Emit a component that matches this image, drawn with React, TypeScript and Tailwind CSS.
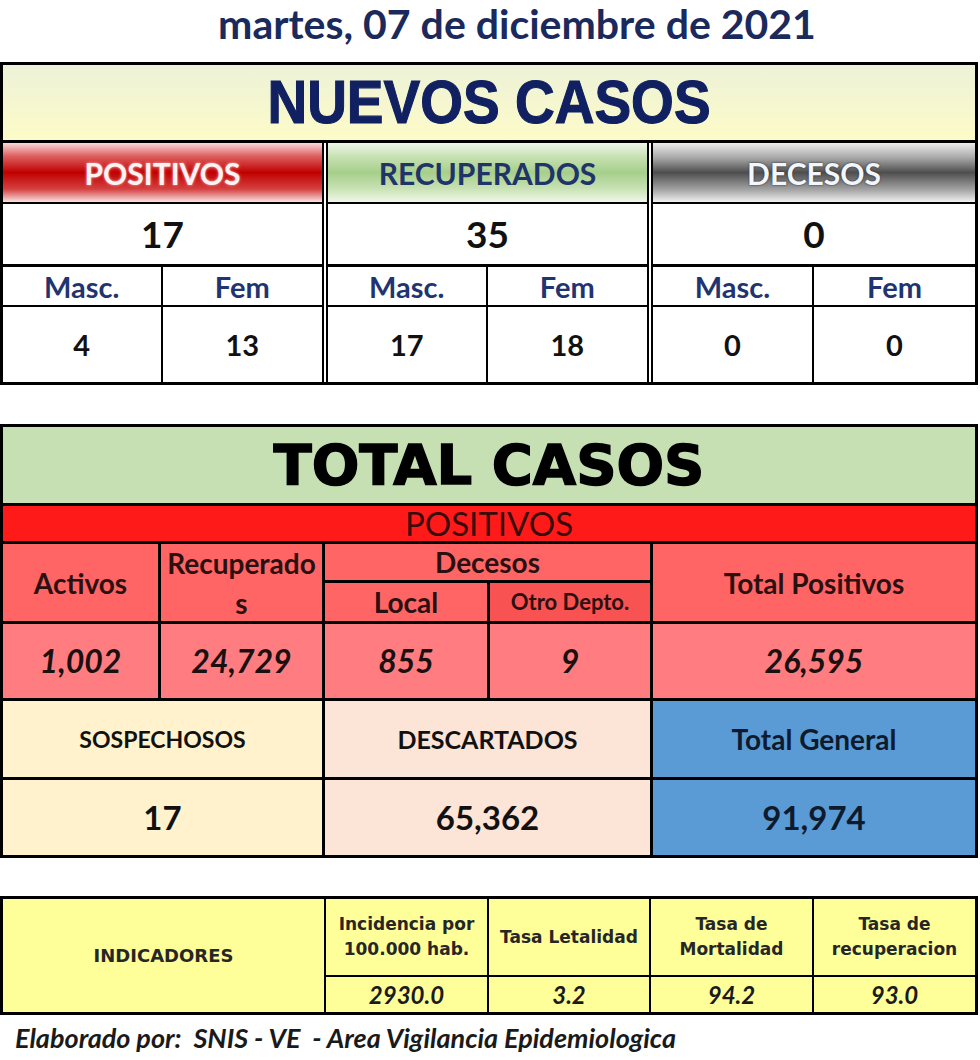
import React from "react";

type GroupProps = {
  title: string;
  titleClass: string;
  bgClass: string;
  total: string;
  m: string;
  f: string;
  className: string;
};

function Group({ title, titleClass, bgClass, total, m, f, className }: GroupProps) {
  return (
    <div className={`flex flex-col border-black ${className}`}>
      <div className={`h-[61px] border-b-2 border-black flex items-center justify-center ${bgClass}`}>
        <span className={`text-[30px] font-bold leading-none ${titleClass}`}>{title}</span>
      </div>
      <div className="h-[63px] border-b-[3px] border-black flex items-center justify-center text-[37px] font-bold text-[#111]">
        {total}
      </div>
      <div className="h-[40px] border-b-2 border-black grid grid-cols-2 text-[29px] font-bold text-[#1f3470] leading-none">
        <div className="border-r-2 border-black flex items-center justify-center">Masc.</div>
        <div className="flex items-center justify-center">Fem</div>
      </div>
      <div className="h-[75px] grid grid-cols-2 text-[29px] font-bold text-[#111]">
        <div className="border-r-2 border-black flex items-center justify-center">{m}</div>
        <div className="flex items-center justify-center">{f}</div>
      </div>
    </div>
  );
}

export default function App() {
  return (
    <div className="w-[980px] h-[1060px] bg-white font-['Lato',sans-serif] text-black overflow-hidden">
      {/* Title */}
      <div className="h-[62px] flex items-start justify-center pl-[54px]">
        <span className="block text-[41px] font-bold text-[#1b2a5c] leading-[48px]">martes, 07 de diciembre de 2021</span>
      </div>

      {/* NUEVOS CASOS */}
      <div className="w-[978px] border-[3px] border-black">
        <div className="h-[78px] border-b-[3px] border-black bg-[linear-gradient(to_bottom,#edf2d8,#fdfbc8)] flex items-center justify-center">
          <span className="font-['Liberation_Sans',sans-serif] font-bold text-[55px] leading-none text-[#102060] scale-y-110 [-webkit-text-stroke:1px_#102060]">
            NUEVOS CASOS
          </span>
        </div>
        <div className="flex">
          <Group
            className="w-[321px] border-r-2"
            title="POSITIVOS"
            titleClass="text-[#fff2f2] [text-shadow:0_0_3px_#ffb0b0]"
            bgClass="bg-[linear-gradient(to_bottom,#f8dada_0%,#de6060_22%,#c00000_50%,#d44040_78%,#fbe2e2_100%)]"
            total="17"
            m="4"
            f="13"
          />
          <Group
            className="ml-[2px] w-[323px] border-x-2"
            title="RECUPERADOS"
            titleClass="text-[#1f3468]"
            bgClass="bg-[linear-gradient(to_bottom,#eef6e8_0%,#c5e0b0_25%,#a6cf8a_50%,#c5e0b0_75%,#f0f7ea_100%)]"
            total="35"
            m="17"
            f="18"
          />
          <Group
            className="ml-[2px] flex-1 border-l-2"
            title="DECESOS"
            titleClass="text-[#f2f6ff] [text-shadow:0_0_2px_#222]"
            bgClass="bg-[linear-gradient(to_bottom,#ececec_0%,#a8a8a8_25%,#4e4e4e_50%,#a0a0a0_78%,#f0f0f0_100%)]"
            total="0"
            m="0"
            f="0"
          />
        </div>
      </div>

      {/* TOTAL CASOS */}
      <div className="mt-[39px] w-[978px] border-[3px] border-black">
        <div className="h-[79px] border-b-[3px] border-black bg-[#c6e0b4] flex items-center justify-center">
          <span className="font-['DejaVu_Sans',sans-serif] font-bold text-[56px] leading-none text-black [-webkit-text-stroke:1.5px_black]">
            TOTAL CASOS
          </span>
        </div>
        <div className="h-[38px] border-b-[3px] border-black bg-[#ff1a1a] flex items-center justify-center">
          <span className="text-[33px] leading-none text-[#3a0a0a]">POSITIVOS</span>
        </div>

        {/* header row */}
        <div className="h-[80px] border-b-[3px] border-black flex bg-[#ff6565] text-[28px] font-bold text-[#2b1010] leading-none">
          <div className="w-[158px] border-r-[3px] border-black flex items-center justify-center">Activos</div>
          <div className="w-[164px] border-r-[3px] border-black flex flex-col items-center justify-center gap-[12px]">
            <span>Recuperado</span>
            <span>s</span>
          </div>
          <div className="w-[328px] border-r-[3px] border-black flex flex-col">
            <div className="h-[39px] border-b-[3px] border-black flex items-center justify-center">Decesos</div>
            <div className="flex-1 flex">
              <div className="w-[165px] border-r-[3px] border-black flex items-center justify-center">Local</div>
              <div className="flex-1 bg-[#f85252] flex items-center justify-center text-[22px]">Otro Depto.</div>
            </div>
          </div>
          <div className="flex-1 flex items-center justify-center">Total Positivos</div>
        </div>

        {/* values row */}
        <div className="h-[77px] border-b-[3px] border-black flex bg-[#ff7d80] text-[32px] font-bold italic text-[#1a1010] leading-none">
          <div className="w-[158px] border-r-[3px] border-black flex items-center justify-center">1,002</div>
          <div className="w-[164px] border-r-[3px] border-black flex items-center justify-center">24,729</div>
          <div className="w-[165px] border-r-[3px] border-black flex items-center justify-center">855</div>
          <div className="w-[163px] border-r-[3px] border-black flex items-center justify-center">9</div>
          <div className="flex-1 flex items-center justify-center">26,595</div>
        </div>

        {/* sospechosos header */}
        <div className="h-[79px] border-b-[3px] border-black flex font-bold text-[#111] leading-none">
          <div className="w-[322px] border-r-[3px] border-black bg-[#fff2cc] flex items-center justify-center text-[23px]">
            SOSPECHOSOS
          </div>
          <div className="w-[328px] border-r-[3px] border-black bg-[#fce4d6] flex items-center justify-center text-[25px]">
            DESCARTADOS
          </div>
          <div className="flex-1 bg-[#5b9bd5] flex items-center justify-center text-[#0e1a2e] text-[28px]">Total General</div>
        </div>
        <div className="h-[75px] flex text-[33px] font-bold text-[#111] leading-none">
          <div className="w-[322px] border-r-[3px] border-black bg-[#fff2cc] flex items-center justify-center">17</div>
          <div className="w-[328px] border-r-[3px] border-black bg-[#fce4d6] flex items-center justify-center">65,362</div>
          <div className="flex-1 bg-[#5b9bd5] flex items-center justify-center text-[#0e1a2e]">91,974</div>
        </div>
      </div>

      {/* INDICADORES */}
      <div className="mt-[38px] w-[978px] border-[3px] border-black flex bg-[#ffff99] text-[#262626]">
        <div className="w-[323px] border-r-2 border-black flex items-center justify-center font-['DejaVu_Sans',sans-serif] font-bold text-[18px]">
          INDICADORES
        </div>
        <div className="flex-1 flex flex-col">
          <div className="h-[78px] border-b-2 border-black flex font-['DejaVu_Sans',sans-serif] font-bold text-[17px] leading-[25px] text-center">
            <div className="w-[163px] border-r-2 border-black flex items-center justify-center">
              Incidencia por<br />100.000 hab.
            </div>
            <div className="w-[162px] border-r-2 border-black flex items-center justify-center">Tasa Letalidad</div>
            <div className="w-[163px] border-r-2 border-black flex items-center justify-center">
              Tasa de<br />Mortalidad
            </div>
            <div className="flex-1 flex items-center justify-center">
              Tasa de<br />recuperacion
            </div>
          </div>
          <div className="h-[35px] flex text-[24px] font-bold italic leading-none text-[#1a1a1a]">
            <div className="w-[163px] border-r-2 border-black flex items-center justify-center">2930.0</div>
            <div className="w-[162px] border-r-2 border-black flex items-center justify-center">3.2</div>
            <div className="w-[163px] border-r-2 border-black flex items-center justify-center">94.2</div>
            <div className="flex-1 flex items-center justify-center">93.0</div>
          </div>
        </div>
      </div>

      {/* footer */}
      <div className="h-[45px] pl-[15px] flex items-center">
        <span className="text-[27px] font-bold italic text-[#1a1a1a] whitespace-pre leading-none">
          Elaborado por:  SNIS - VE  - Area Vigilancia Epidemiologica
        </span>
      </div>
    </div>
  );
}
